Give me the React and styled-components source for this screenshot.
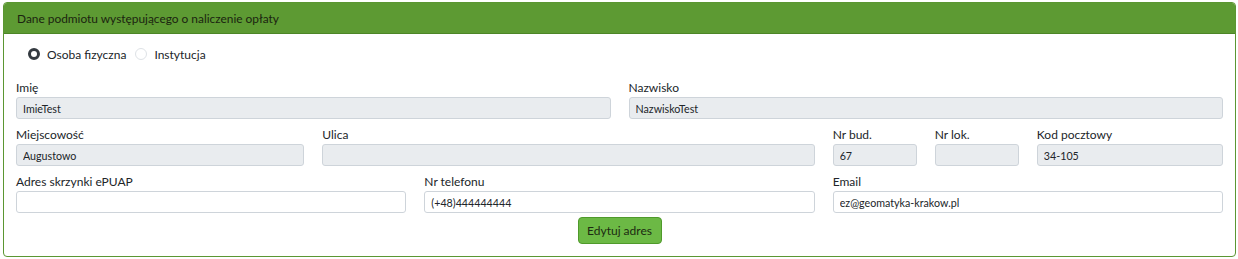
import React, { useState } from "react";
import styled, { createGlobalStyle } from "styled-components";

const GlobalStyle = createGlobalStyle`
  * { box-sizing: border-box; }
  body {
    margin: 0;
    background: #ffffff;
    font-family: Lato, "Noto Sans", sans-serif;
    color: #212529;
  }
`;

const Page = styled.div`
  padding: 2px 2px 0 3px;
`;

const Card = styled.section`
  border: 1px solid #5b9632;
  border-radius: 4px;
  overflow: hidden;
  background: #fff;
`;

const Header = styled.div`
  height: 31px;
  background: #5d9a33;
  border-bottom: 1px solid #4c8526;
  padding: 0 13px;
  display: flex;
  align-items: center;
  font-size: 11.9px;
  color: #1b2410;
`;

const Body = styled.div`
  padding: 11px 12px 12px 12px;
  display: flex;
  flex-direction: column;
`;

const RadioRow = styled.div`
  display: flex;
  align-items: center;
  gap: 9px;
  padding-left: 12px;
  height: 18px;
  margin-bottom: 15px;
`;

const RadioLabel = styled.label`
  display: flex;
  align-items: center;
  gap: 7px;
  font-size: 12px;
  cursor: pointer;
`;

const RadioDot = styled.span`
  width: 12px;
  height: 12px;
  border-radius: 50%;
  background: #fff;
  border: ${({ $checked }) => ($checked ? "3.5px solid #343a40" : "1px solid #dee2e6")};
`;

const Grid = styled.div`
  display: grid;
  grid-template-columns: repeat(12, 1fr);
  column-gap: 18px;
`;

const Group = styled.div`
  grid-column: span ${({ $span }) => $span};
  display: flex;
  flex-direction: column;
  margin-bottom: 6px;
`;

const Label = styled.label`
  font-size: 12px;
  line-height: 19px;
  height: 19px;
`;

const Input = styled.input`
  height: 22px;
  width: 100%;
  border: 1px solid #ced4da;
  border-radius: 3px;
  padding: 0 6px;
  font-family: Lato, "Noto Sans", sans-serif;
  font-size: 10.7px;
  color: #212529;
  background: ${({ disabled }) => (disabled ? "#e9ecef" : "#fff")};
  outline: none;
`;

const Actions = styled.div`
  display: flex;
  justify-content: center;
  margin-top: -2px;
`;

const Button = styled.button`
  height: 27px;
  width: 84px;
  padding: 0;
  border: 1px solid #4f9a2b;
  border-radius: 4px;
  background: #6cb945;
  color: #1c2a12;
  font-family: Lato, "Noto Sans", sans-serif;
  font-size: 12px;
  cursor: pointer;
`;

const fields = [
  { label: "Imię", value: "ImieTest", span: 6, disabled: true },
  { label: "Nazwisko", value: "NazwiskoTest", span: 6, disabled: true },
  { label: "Miejscowość", value: "Augustowo", span: 3, disabled: true },
  { label: "Ulica", value: "", span: 5, disabled: true },
  { label: "Nr bud.", value: "67", span: 1, disabled: true },
  { label: "Nr lok.", value: "", span: 1, disabled: true },
  { label: "Kod pocztowy", value: "34-105", span: 2, disabled: true },
  { label: "Adres skrzynki ePUAP", value: "", span: 4 },
  { label: "Nr telefonu", value: "(+48)444444444", span: 4 },
  { label: "Email", value: "ez@geomatyka-krakow.pl", span: 4 },
];

export default function App() {
  const [kind, setKind] = useState("osoba");

  return (
    <Page>
      <GlobalStyle />
      <Card>
        <Header>Dane podmiotu występującego o naliczenie opłaty</Header>
        <Body>
          <RadioRow>
            <RadioLabel onClick={() => setKind("osoba")}>
              <RadioDot $checked={kind === "osoba"} />
              Osoba fizyczna
            </RadioLabel>
            <RadioLabel onClick={() => setKind("instytucja")}>
              <RadioDot $checked={kind === "instytucja"} />
              Instytucja
            </RadioLabel>
          </RadioRow>
          <Grid>
            {fields.map((f) => (
              <Group key={f.label} $span={f.span}>
                <Label>{f.label}</Label>
                <Input defaultValue={f.value} disabled={f.disabled} />
              </Group>
            ))}
          </Grid>
          <Actions>
            <Button>Edytuj adres</Button>
          </Actions>
        </Body>
      </Card>
    </Page>
  );
}
